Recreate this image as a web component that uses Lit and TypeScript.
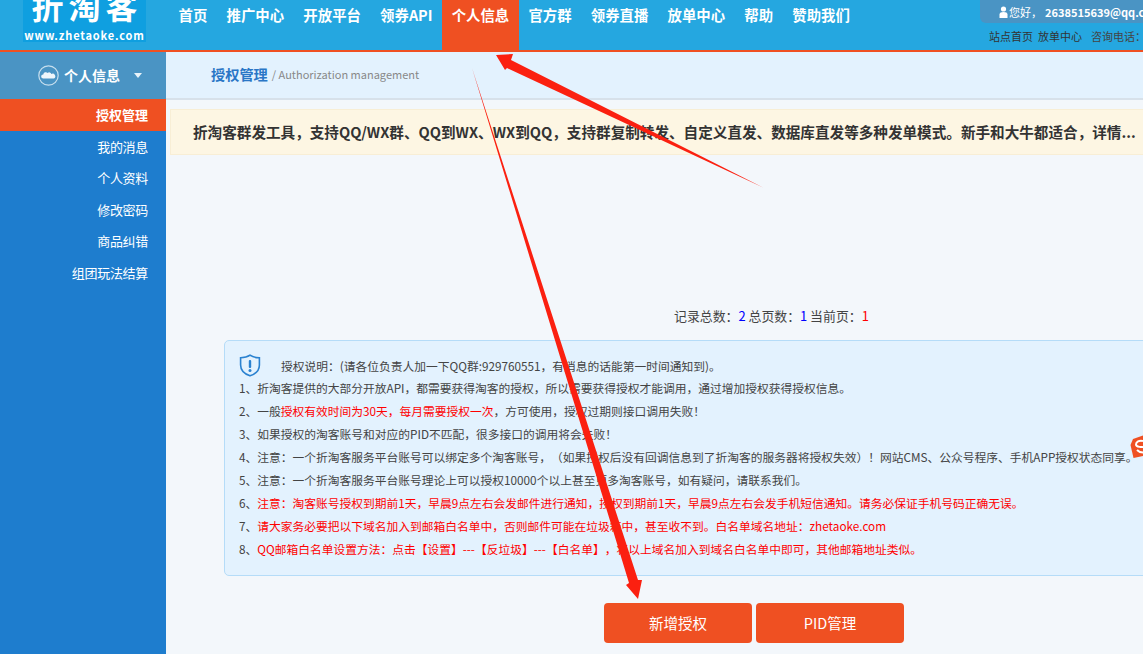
import { LitElement, html, css } from "lit";
import { customElement } from "lit/decorators.js";

const NAV = ["首页", "推广中心", "开放平台", "领券API", "个人信息", "官方群", "领券直播", "放单中心", "帮助", "赞助我们"];
const SIDE = ["授权管理", "我的消息", "个人资料", "修改密码", "商品纠错", "组团玩法结算"];

@customElement("app-root")
export class AppRoot extends LitElement {
  static styles = css`
    :host { display: block; width: 1143px; height: 654px; overflow: hidden; position: relative; background: #f3f7fb;
      font-family: "Noto Sans CJK SC", "Noto Sans", sans-serif; font-size: 12px; color: #333; text-spacing-trim: space-all; }
    * { box-sizing: border-box; }
    .top { height: 52px; background: #25a7e0; border-bottom: 2px solid #ef5022; display: flex; }
    .logo { margin-left: 23px; width: 123px; height: 42px; background: #0f9fe0; color: #fff; display: flex; flex-direction: column; align-items: center; overflow: hidden; flex: none; }
    .logo b { font-size: 32px; line-height: 32px; letter-spacing: 5px; padding-left: 5px; margin-top: -11px; font-weight: 700; }
    .logo span { font-size: 11px; line-height: 14px; letter-spacing: 0.85px; margin-top: 7px; font-weight: 700; white-space: nowrap; }
    nav { display: flex; margin-left: 23px; flex: none; }
    nav a { height: 50px; padding: 0 9.6px; font-size: 14.4px; font-weight: 700; color: #fff; line-height: 30px; white-space: nowrap; }
    nav a.on { background: #ef5022; }
    .tr { margin-left: auto; width: 163px; flex: none; overflow: hidden; white-space: nowrap; }
    .user { height: 23px; background: #4a94c4; border-radius: 0 0 0 6px; color: #fff; padding-left: 19px; font-size: 11px; line-height: 20px; display: flex; align-items: center; }
    .user svg { flex: none; margin-right: 1px; }
    .user b { margin-left: 3px; }
    .links { display: flex; padding: 5px 0 0 9px; line-height: 16px; font-size: 11px; color: #333; }
    .links span { margin-right: 5px; }
    .links span.tel { margin-left: 4px; color: #444; }
    .body { display: flex; height: 602px; }
    aside { width: 166px; flex: none; background: #1e7dce; color: #fff; }
    .sh { height: 47px; background: #4a94c4; display: flex; align-items: center; padding: 0 0 1px 38px; font-size: 14px; font-weight: 700; }
    .sh .tri { width: 0; height: 0; border: 4.5px solid transparent; border-top: 5px solid #e8f3fa; border-bottom: 0; margin-left: 14px; }
    .sh svg { margin-right: 5px; }
    .si { height: 31.6px; line-height: 31.6px; text-align: right; padding-right: 18px; font-size: 13px; letter-spacing: -0.3px; }
    .si.on { background: #ef5022; font-weight: 700; letter-spacing: 0; }
    main { flex: 1; min-width: 0; }
    .crumb { height: 48px; background: #e3f2fe; border-bottom: 2px solid #d7e1ea; padding: 0 0 2px 45px; display: flex; align-items: center; color: #888; font-size: 11px; white-space: nowrap; }
    .crumb b { color: #2a76c6; font-size: 14.2px; margin-right: 4px; }
    .notice { margin: 9px 0 0 4px; height: 46px; width: 973px; background: #fdf6e3; border: 1px solid #f8eed5; border-right: 0; padding-left: 22px; line-height: 43px; font-size: 14.6px; font-weight: 700; color: #333; white-space: nowrap; overflow: hidden; }
    .count { margin: 152px 0 0 508px; height: 18px; line-height: 18px; font-size: 12.9px; color: #444; white-space: nowrap; }
    .count .b { color: #00f; } .count .r { color: #f00; }
    .box { margin: 15px 0 0 58px; width: 960px; height: 236px; background: #e3f2fe; border: 1px solid #b5dcf8; border-radius: 5px; padding: 13px 14px 0; font-size: 11.75px; line-height: 23px; color: #444; white-space: nowrap; }
    .box .first { display: flex; align-items: center; height: 22px; }
    .box .first svg { margin-right: 20px; flex: none; }
    .r { color: #f00; }
    .btns { display: flex; gap: 4px; margin: 27px 0 0 438px; }
    .btn { width: 148px; height: 40px; border-radius: 4px; background: #ef5022; color: #fff; font-size: 14.5px; line-height: 40px; text-align: center; }
    .over { position: absolute; left: 0; top: 0; width: 1143px; height: 654px; pointer-events: none; }
  `;

  render() {
    return html`
      <div class="top">
        <div class="logo"><b>折淘客</b><span>www.zhetaoke.com</span></div>
        <nav>${NAV.map((n, i) => html`<a class=${i === 4 ? "on" : ""}>${n}</a>`)}</nav>
        <div class="tr">
          <div class="user">
            <svg width="9" height="12" viewBox="0 0 9 12"><circle cx="4.5" cy="3" r="2.6" fill="#fff"/><path d="M0.5 12V8.5C0.5 6.8 2 6 4.5 6S8.5 6.8 8.5 8.5V12Z" fill="#fff"/></svg>
            您好，<b>2638515639@qq.com</b>
          </div>
          <div class="links"><span>站点首页</span><span>放单中心</span><span class="tel">咨询电话：</span></div>
        </div>
      </div>
      <div class="body">
        <aside>
          <div class="sh">
            <svg width="21" height="21" viewBox="0 0 21 21"><circle cx="10.5" cy="10.5" r="9.7" fill="none" stroke="#c7dfee" stroke-width="1.2"/><path d="M5 13.5a2 2 0 0 1 .3-4 2.6 2.6 0 0 1 4.4-1.6 2.2 2.2 0 0 1 3.6 1 2.3 2.3 0 0 1 2.6 4.6Z" fill="#eef6fb"/></svg>
            个人信息<i class="tri"></i>
          </div>
          ${SIDE.map((s, i) => html`<div class="si ${i === 0 ? "on" : ""}">${s}</div>`)}
        </aside>
        <main>
          <div class="crumb"><b>授权管理</b>/ Authorization management</div>
          <div class="notice">折淘客群发工具，支持QQ/WX群、QQ到WX、WX到QQ，支持群复制转发、自定义直发、数据库直发等多种发单模式。新手和大牛都适合，详情...</div>
          <div class="count">记录总数：<span class="b">2</span> 总页数：<span class="b">1</span> 当前页：<span class="r">1</span></div>
          <div class="box">
            <div class="first">
              <svg width="22" height="23" viewBox="0 0 22 23"><path d="M11 1.2C8.500 3 5 3.800 1.600 3.800V11c0 5.300 4 9 9.400 10.800C16.400 20 20.400 16.300 20.400 11V3.800C17 3.800 13.500 3 11 1.200Z" fill="none" stroke="#2a82d0" stroke-width="1.600"/><rect x="9.800" y="6" width="2.400" height="8" rx="1" fill="#2a82d0"/><circle cx="11" cy="16.500" r="1.500" fill="#2a82d0"/></svg>
              授权说明：(请各位负责人加一下QQ群:929760551，有消息的话能第一时间通知到)。
            </div>
            <div>1、折淘客提供的大部分开放API，都需要获得淘客的授权，所以需要获得授权才能调用，通过增加授权获得授权信息。</div>
            <div>2、一般<span class="r">授权有效时间为30天，每月需要授权一次</span>，方可使用，授权过期则接口调用失败！</div>
            <div>3、如果授权的淘客账号和对应的PID不匹配，很多接口的调用将会失败！</div>
            <div>4、注意：一个折淘客服务平台账号可以绑定多个淘客账号，（如果授权后没有回调信息到了折淘客的服务器将授权失效）！网站CMS、公众号程序、手机APP授权状态同享。</div>
            <div>5、注意：一个折淘客服务平台账号理论上可以授权10000个以上甚至更多淘客账号，如有疑问，请联系我们。</div>
            <div>6、<span class="r">注意：淘客账号授权到期前1天，早晨9点左右会发邮件进行通知，授权到期前1天，早晨9点左右会发手机短信通知。请务必保证手机号码正确无误。</span></div>
            <div>7、<span class="r">请大家务必要把以下域名加入到邮箱白名单中，否则邮件可能在垃圾箱中，甚至收不到。白名单域名地址：zhetaoke.com</span></div>
            <div>8、<span class="r">QQ邮箱白名单设置方法：点击【设置】---【反垃圾】---【白名单】，将以上域名加入到域名白名单中即可，其他邮箱地址类似。</span></div>
          </div>
          <div class="btns"><div class="btn">新增授权</div><div class="btn">PID管理</div></div>
        </main>
      </div>
      <svg class="over" viewBox="0 0 1143 654">
        <path d="M1143 435.500L1133 439L1130.500 445L1133.500 458L1143 456Z" fill="#ef5022"/>
        <path d="M1143 441C1139 440 1136 442 1136 444.500C1136 447.500 1143 447 1143 447" fill="none" stroke="#fff" stroke-width="2"/>
        <path d="M1137 450C1139 452 1141 452.500 1143 452.500" fill="none" stroke="#fff" stroke-width="2"/>
        <path d="M763 187.500L511 60L513 54L496 55L505 70L507 68Z" fill="#fb2010"/>
        <path d="M472 68L638 580L642 580L638 599L626 585L629 583Z" fill="#fb2010"/>
      </svg>
    `;
  }
}
